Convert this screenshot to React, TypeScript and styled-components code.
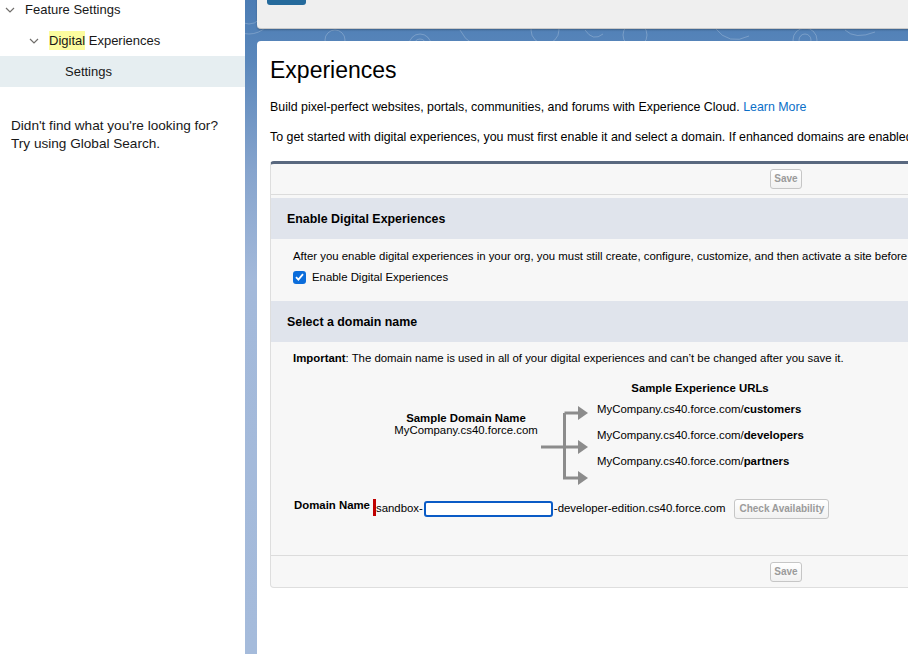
import React from 'react';
import styled, { createGlobalStyle } from 'styled-components';

const Global = createGlobalStyle`
  html, body { margin: 0; padding: 0; background: #fff; overflow: hidden; }
  #root { width: 908px; height: 654px; overflow: hidden; }
  * { box-sizing: border-box; }
`;

const Page = styled.div`
  display: flex;
  width: 908px;
  height: 654px;
  overflow: hidden;
  font-family: "Liberation Sans", Arial, Helvetica, sans-serif;
  color: #000;
`;

const Sidebar = styled.aside`
  width: 245px;
  flex: none;
  background: #fff;
  color: #181818;
  font-family: "Liberation Sans", Arial, sans-serif;
`;

const Tree = styled.div`
  margin-top: -6px;
  display: flex;
  flex-direction: column;
`;

const TreeRow = styled.div<{ $indent: number; $selected?: boolean }>`
  height: 31px;
  display: flex;
  align-items: center;
  padding-left: ${p => p.$indent}px;
  font-size: 13px;
  background: ${p => (p.$selected ? '#e6eef1' : 'transparent')};
`;

const Caret = styled.span`
  width: 16px;
  margin-left: -23px;
  margin-right: 7px;
  display: flex;
  align-items: center;
  justify-content: center;
  color: #706e6b;
`;

const Mark = styled.mark`
  background: #fcfc9f;
  color: inherit;
  padding: 2px 0;
`;

const Help = styled.p`
  margin: 30px 0 0;
  padding-left: 11px;
  font-size: 13.6px;
  line-height: 18px;
`;

const Main = styled.main`
  flex: 1;
  min-width: 0;
  display: flex;
  flex-direction: column;
  gap: 12px;
  padding-left: 12px;
  background: linear-gradient(180deg, #4b7cb4 0px, #5a87bb 60px, #86a4cd 170px, #a3b9da 280px, #a5bbdb 654px);
  position: relative;
  overflow: hidden;
`;

const Swirls = styled.svg`
  position: absolute;
  left: 0;
  top: 0;
  pointer-events: none;
`;

const TopCard = styled.div`
  position: relative;
  margin-top: -20px;
  height: 49px;
  width: 1100px;
  flex: none;
  background: #efefef;
  border-bottom: 1px solid #c9c9c9;
  border-radius: 0 0 0 4px;
  box-shadow: 0 1px 2px rgba(0, 0, 0, 0.25);
  display: flex;
  align-items: flex-end;
  padding: 0 0 23px 10px;
`;

const TopButton = styled.div`
  width: 39px;
  height: 20px;
  background: #256a9c;
  border-radius: 3px;
`;

const Panel = styled.section`
  position: relative;
  flex: 1;
  width: 1100px;
  background: #fff;
  border-radius: 4px 0 0 0;
  padding: 15px 0 0 13px;
`;

const Title = styled.h1`
  margin: 0;
  font-size: 23px;
  font-weight: 400;
  line-height: 28px;
  color: #000;
`;

const Intro = styled.p<{ $top: number }>`
  margin: ${p => p.$top}px 0 0;
  font-size: 12.4px;
  line-height: 16px;
  white-space: nowrap;
  color: #000;
`;

const Link = styled.a`
  color: #0b6fc8;
  text-decoration: none;
`;

const FormBox = styled.div`
  margin-top: 16px;
  width: 1032px;
  background: #f7f7f7;
  border: 1px solid #dedede;
  border-top: 3px solid #59687f;
  border-radius: 4px;
`;

const ButtonBar = styled.div<{ $top?: boolean }>`
  height: ${p => (p.$top ? 31 : 32)}px;
  display: flex;
  align-items: center;
  justify-content: center;
  ${p => (p.$top ? 'border-bottom: 1px solid #dcdcdc; margin-bottom: 3px;' : 'border-top: 1px solid #dcdcdc;')}
`;

const Button = styled.button`
  font-family: "Liberation Sans", Arial, sans-serif;
  font-size: 10px;
  font-weight: 700;
  color: #9b9b9b;
  height: 20px;
  padding: 0 3px;
  background: linear-gradient(#ffffff, #f1f1f1);
  border: 1px solid #c6c6c6;
  border-radius: 3px;
  line-height: 18px;
`;

const SectionHead = styled.h3`
  margin: 0;
  height: 41px;
  display: flex;
  align-items: center;
  padding-left: 16px;
  background: #e0e4ec;
  font-size: 12.4px;
  font-weight: 700;
  color: #000;
`;

const SectionBody = styled.div<{ $h: number; $pt: number }>`
  height: ${p => p.$h}px;
  padding: ${p => p.$pt}px 0 0 22px;
  font-size: 11.4px;
  line-height: 16px;
  white-space: nowrap;
`;

const CheckRow = styled.label`
  display: flex;
  align-items: center;
  gap: 6px;
  margin-top: 5px;
  height: 16px;
`;

const Check = styled.span`
  width: 13px;
  height: 13px;
  border-radius: 3px;
  background: #0b6ddb;
  display: flex;
  align-items: center;
  justify-content: center;
`;

const Diagram = styled.div`
  display: flex;
  align-items: flex-start;
  margin-top: 14px;
  margin-left: 101px;
`;

const SampleDomain = styled.div`
  width: 144px;
  margin-top: 32px;
  text-align: center;
  line-height: 12px;
`;

const Bold = styled.b`
  font-weight: 700;
`;

const Arrows = styled.svg`
  flex: none;
  margin-left: 3px;
  margin-top: 26px;
`;

const Urls = styled.div`
  margin-left: 6px;
  width: 206px;
  display: flex;
  flex-direction: column;
`;

const UrlsTitle = styled.div`
  text-align: center;
  font-weight: 700;
  line-height: 16px;
`;

const Url = styled.div`
  line-height: 26px;
`;

const DomainRow = styled.div`
  display: flex;
  align-items: flex-start;
  margin-top: 12px;
  margin-left: 1px;
`;

const DomainLabel = styled.div`
  width: 79px;
  font-weight: 700;
  line-height: 14px;
`;

const Required = styled.span`
  width: 3px;
  height: 17px;
  background: #c00000;
  margin-top: 1px;
`;

const Affix = styled.span`
  line-height: 18px;
  margin-top: 1px;
`;

const DomainInput = styled.input`
  width: 129px;
  height: 16px;
  margin: 3px 1px 0 1px;
  border: 2px solid #0a5bc6;
  border-radius: 3px;
  background: #fff;
  outline: none;
  padding: 0 2px;
`;

const CheckButton = styled(Button)`
  margin-left: 9px;
  margin-top: 1px;
  padding: 0 4px;
`;

const Spacer = styled.div`
  flex: 1;
`;

export default function App() {
  return (
    <>
      <Global />
      <Page>
        <Sidebar>
          <Tree>
            <TreeRow $indent={25}>
              <Caret>
                <svg width="10" height="6" viewBox="0 0 10 6"><path d="M1 1l4 4 4-4" fill="none" stroke="#706e6b" strokeWidth="1.2" /></svg>
              </Caret>
              Feature Settings
            </TreeRow>
            <TreeRow $indent={49}>
              <Caret>
                <svg width="10" height="6" viewBox="0 0 10 6"><path d="M1 1l4 4 4-4" fill="none" stroke="#706e6b" strokeWidth="1.2" /></svg>
              </Caret>
              <Mark>Digital</Mark>&nbsp;Experiences
            </TreeRow>
            <TreeRow $indent={65} $selected>Settings</TreeRow>
          </Tree>
          <Help>
            Didn't find what you're looking for?
            <br />
            Try using Global Search.
          </Help>
        </Sidebar>
        <Main>
          <Swirls width="663" height="60" viewBox="0 0 663 60">
            <g fill="none" stroke="rgba(255,255,255,0.22)" strokeWidth="1">
              <circle cx="4" cy="10" r="14" />
              <circle cx="4" cy="10" r="24" />
              <circle cx="90" cy="40" r="10" />
              <circle cx="175" cy="45" r="11" />
              <circle cx="175" cy="45" r="6" />
              <path d="M215 30 q10 20 30 14 q20 -6 28 8" />
              <circle cx="300" cy="30" r="14" />
              <path d="M340 30 q8 12 18 4" />
              <circle cx="390" cy="35" r="12" />
              <path d="M470 28 q14 18 34 8" />
              <circle cx="560" cy="40" r="12" />
              <circle cx="560" cy="40" r="6" />
              <path d="M600 30 q10 10 30 2" />
            </g>
          </Swirls>
          <TopCard>
            <TopButton />
          </TopCard>
          <Panel>
            <Title>Experiences</Title>
            <Intro $top={15}>
              Build pixel-perfect websites, portals, communities, and forums with Experience Cloud. <Link href="#">Learn More</Link>
            </Intro>
            <Intro $top={14}>
              To get started with digital experiences, you must first enable it and select a domain. If enhanced domains are enabled in your org, your domain name is set for you.
            </Intro>
            <FormBox>
              <ButtonBar $top>
                <Button>Save</Button>
              </ButtonBar>
              <SectionHead>Enable Digital Experiences</SectionHead>
              <SectionBody $h={62} $pt={9}>
                After you enable digital experiences in your org, you must still create, configure, customize, and then activate a site before your users can access it.
                <CheckRow>
                  <Check>
                    <svg width="9" height="8" viewBox="0 0 9 8"><path d="M1 4.2l2.4 2.4L8 1.2" fill="none" stroke="#fff" strokeWidth="1.8" /></svg>
                  </Check>
                  Enable Digital Experiences
                </CheckRow>
              </SectionBody>
              <SectionHead>Select a domain name</SectionHead>
              <SectionBody $h={213} $pt={8}>
                <Bold>Important</Bold>: The domain name is used in all of your digital experiences and can’t be changed after you save it.
                <Diagram>
                  <SampleDomain>
                    <Bold>Sample Domain Name</Bold>
                    <br />
                    MyCompany.cs40.force.com
                  </SampleDomain>
                  <Arrows width="50" height="80" viewBox="0 0 50 80">
                    <g fill="none" stroke="#8c8c8c" strokeWidth="3">
                      <path d="M0 41 H38" />
                      <path d="M23.5 7 V72 H38" />
                      <path d="M23.5 7 H38" />
                    </g>
                    <g fill="#8c8c8c">
                      <path d="M37 0 L47 7 L37 14 Z" />
                      <path d="M37 34 L47 41 L37 48 Z" />
                      <path d="M37 65 L47 72 L37 79 Z" />
                    </g>
                  </Arrows>
                  <Urls>
                    <UrlsTitle>Sample Experience URLs</UrlsTitle>
                    <Url>MyCompany.cs40.force.com/<Bold>customers</Bold></Url>
                    <Url>MyCompany.cs40.force.com/<Bold>developers</Bold></Url>
                    <Url>MyCompany.cs40.force.com/<Bold>partners</Bold></Url>
                  </Urls>
                </Diagram>
                <DomainRow>
                  <DomainLabel>Domain Name</DomainLabel>
                  <Required />
                  <Affix>sandbox-</Affix>
                  <DomainInput aria-label="Domain name" />
                  <Affix>-developer-edition.cs40.force.com</Affix>
                  <CheckButton>Check Availability</CheckButton>
                  <Spacer />
                </DomainRow>
              </SectionBody>
              <ButtonBar>
                <Button>Save</Button>
              </ButtonBar>
            </FormBox>
          </Panel>
        </Main>
      </Page>
    </>
  );
}
